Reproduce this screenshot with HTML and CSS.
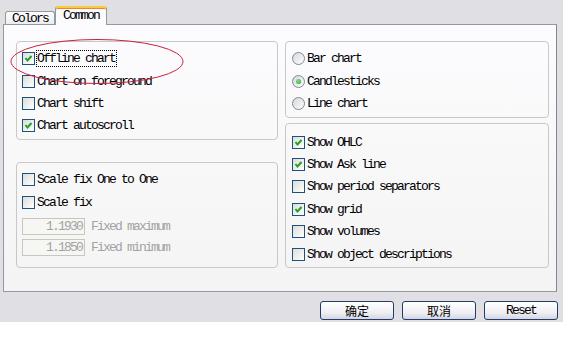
FILE: index.html
```html
<!DOCTYPE html>
<html lang="en">
<head>
<meta charset="utf-8">
<title>Chart properties</title>
<link rel="stylesheet" href="styles.css">
</head>
<body>
<div class="window">
  <div class="tabs">
    <div class="tab">Colors</div>
    <div class="tab active">Common</div>
  </div>
  <div class="panel">
    <div class="col left">
      <div class="group first">
        <div class="row"><span class="box checked"><svg viewBox="0 0 11 11"><polyline points="2.5,5 4.5,7.5 8.5,3"/></svg></span><span class="label focus">Offline chart</span></div>
        <div class="row"><span class="box"></span><span class="label">Chart on foreground</span></div>
        <div class="row"><span class="box"></span><span class="label">Chart shift</span></div>
        <div class="row"><span class="box checked"><svg viewBox="0 0 11 11"><polyline points="2.5,5 4.5,7.5 8.5,3"/></svg></span><span class="label">Chart autoscroll</span></div>
      </div>
      <div class="group scale">
        <div class="row"><span class="box"></span><span class="label">Scale fix One to One</span></div>
        <div class="row"><span class="box"></span><span class="label">Scale fix</span></div>
        <div class="field"><span class="input">1.1930</span><span class="label dim">Fixed maximum</span></div>
        <div class="field"><span class="input">1.1850</span><span class="label dim">Fixed minimum</span></div>
      </div>
    </div>
    <div class="col right">
      <div class="group kind">
        <div class="row"><span class="radio"></span><span class="label">Bar chart</span></div>
        <div class="row"><span class="radio on"></span><span class="label">Candlesticks</span></div>
        <div class="row"><span class="radio"></span><span class="label">Line chart</span></div>
      </div>
      <div class="group show">
        <div class="row"><span class="box checked"><svg viewBox="0 0 11 11"><polyline points="2.5,5 4.5,7.5 8.5,3"/></svg></span><span class="label">Show OHLC</span></div>
        <div class="row"><span class="box checked"><svg viewBox="0 0 11 11"><polyline points="2.5,5 4.5,7.5 8.5,3"/></svg></span><span class="label">Show Ask line</span></div>
        <div class="row"><span class="box"></span><span class="label">Show period separators</span></div>
        <div class="row"><span class="box checked"><svg viewBox="0 0 11 11"><polyline points="2.5,5 4.5,7.5 8.5,3"/></svg></span><span class="label">Show grid</span></div>
        <div class="row"><span class="box"></span><span class="label">Show volumes</span></div>
        <div class="row"><span class="box"></span><span class="label">Show object descriptions</span></div>
      </div>
    </div>
  </div>
  <div class="buttons">
    <button class="btn cjk">确定</button>
    <button class="btn cjk">取消</button>
    <button class="btn">Reset</button>
  </div>
  <svg class="mark" width="569" height="338"><ellipse cx="97" cy="61.5" rx="86" ry="22"/></svg>
</div>
</body>
</html>
```
FILE: styles.css
```css
body { margin: 0; background: #fff; }
.window { position: relative; width: 563px; height: 322px; box-sizing: border-box; padding: 6px 6px 0 3px; background: #e0dfe3; display: flex; flex-direction: column; font: 13px "Liberation Mono", monospace; letter-spacing: -1.8px; color: #000; }

.tabs { display: flex; align-items: flex-end; height: 18px; padding-left: 2px; }
.tab { height: 12px; line-height: 13px; padding: 0 6px; border: 1px solid #919b9c; border-bottom: none; border-radius: 3px 3px 0 0; background: linear-gradient(#fefefe, #ecebf0); }
.tab.active { position: relative; z-index: 1; height: 17px; line-height: 15px; margin-bottom: -1px; padding: 0 7px; border-top: 2px solid #ffc83c; background: #fcfcfe; box-shadow: inset 0 1px 0 #e68b2c; }

.panel { flex: none; height: 268px; box-sizing: border-box; border: 1px solid #919b9c; border-right-color: #80898a; background: linear-gradient(#fcfcfe, #f4f4f4); padding: 16px 7px 0 12px; display: flex; gap: 7px; }
.col { display: flex; flex-direction: column; }
.left { width: 262px; gap: 22px; }
.right { width: 264px; gap: 5px; }

.group { box-sizing: border-box; border: 1px solid #c8c8c8; border-radius: 4px; padding: 5.5px 0 0 5px; }
.first { height: 99px; }
.scale { height: 106px; }
.kind { height: 77px; padding-left: 6px; }
.show { height: 145px; padding: 7px 0 0 6px; }

.row { display: flex; align-items: center; height: 22.4px; }
.label { margin-left: 2px; white-space: nowrap; }
.focus { outline: 1px dotted #000; outline-offset: 0; padding: 0 1px 0 0; }
.dim { color: #a3a3a3; margin-left: 6px; }

.box { flex: none; width: 11px; height: 11px; border: 1px solid #1c5180; background: linear-gradient(135deg, #dcdcd7, #fff); display: flex; }
.box svg { width: 11px; height: 11px; fill: none; stroke: #21a121; stroke-width: 2; }
.radio { flex: none; width: 11px; height: 11px; border: 1px solid #7c8a9a; border-radius: 50%; background: linear-gradient(135deg, #d6d6d6, #fff); display: flex; align-items: center; justify-content: center; }
.radio.on::after { content: ""; width: 5px; height: 5px; border-radius: 50%; background: radial-gradient(circle at 40% 40%, #8ee08a, #21a121); }

.field { display: flex; align-items: center; height: 17px; margin-top: 4px; }
.scale .row + .field { margin-top: 5px; }
.input { flex: none; width: 59px; height: 15px; line-height: 15px; border: 1px solid #c9c7ba; background: #f6f6f4; color: #a3a3a3; text-align: right; padding-right: 2px; }

.buttons { display: flex; justify-content: flex-end; gap: 8px; margin: 9px -1px 0 0; }
.btn { width: 74px; height: 19px; padding: 0; border: 1px solid #213b6c; border-radius: 3px; background: linear-gradient(#ffffff, #f0f0f4 60%, #d6d6e2); font: 13px "Liberation Mono", monospace; letter-spacing: -1.8px; color: #000; }
.cjk { font: 12px "Noto Sans CJK SC", sans-serif; letter-spacing: 0; }

.mark { position: absolute; left: 0; top: 0; pointer-events: none; }
.mark ellipse { fill: none; stroke: #c8223c; stroke-width: 1; }
```
